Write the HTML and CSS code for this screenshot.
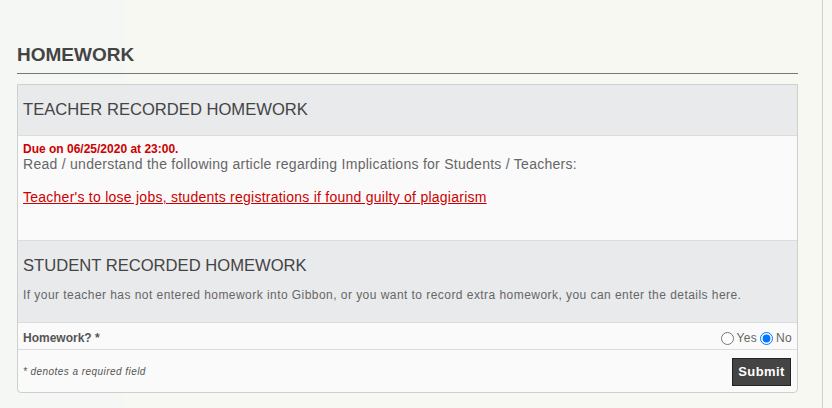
FILE: index.html
```html
<!DOCTYPE html>
<html lang="en">
<head>
  <meta charset="UTF-8" />
  <title>Homework - Gibbon</title>
  <link rel="stylesheet" href="styles.css">
</head>
<body>

  <!-- Page Content -->
  <div class="page">
    <h2 class="page-title">Homework</h2>

    <div class="hw-box">
      <!-- Teacher Section -->
      <div class="hw-head">
        <h3>Teacher Recorded Homework</h3>
      </div>
      <div class="hw-body">
        <div class="due">Due on 06/25/2020 at 23:00.</div>
        <p class="details">Read / understand the following article regarding Implications for Students / Teachers:</p>
        <a class="article-link" href="#">Teacher's to lose jobs, students registrations if found guilty of plagiarism</a>
      </div>

      <!-- Student Section -->
      <div class="hw-head student-head">
        <h3>Student Recorded Homework</h3>
        <p>If your teacher has not entered homework into Gibbon, or you want to record extra homework, you can enter the details here.</p>
      </div>
      <div class="form-row">
        <label class="field-label">Homework? *</label>
        <div class="radios">
          <input type="radio" id="hwYes" name="homework" value="Y"><label for="hwYes">Yes</label>
          <input type="radio" id="hwNo" name="homework" value="N" checked><label for="hwNo">No</label>
        </div>
      </div>
      <div class="form-row form-foot">
        <span class="required-note">* denotes a required field</span>
        <button class="submit-button">Submit</button>
      </div>
    </div>
  </div>

</body>
</html>
```

FILE: styles.css
```css
body {
  margin: 0;
  font-family: "Liberation Sans", Arial, sans-serif;
  background: #f7f8f2;
  height: 408px;
  overflow: hidden;
}

.page {
  width: 823px;
  height: 100%;
  box-sizing: border-box;
  border-right: 1px solid #d0d0cc;
  padding: 44px 0 0 17px;
  background: linear-gradient(to right, #f5f7f4 0, #f5f7f4 125px, #f7f8f2 125px);
}

.page-title {
  width: 781px;
  margin: 0 0 10px;
  padding-bottom: 7px;
  font-size: 19px;
  color: #444;
  text-transform: uppercase;
  border-bottom: 1px solid #777;
}

.hw-box {
  width: 781px;
  box-sizing: border-box;
  border: 1px solid #cfcfcf;
  border-radius: 0 0 4px 4px;
  background: #fafafa;
}

.hw-head {
  background: #e9eaec;
  height: 50px;
  display: flex;
  flex-direction: column;
  justify-content: center;
  padding: 0 5px;
  border-bottom: 1px solid #dcdcdc;
}

.hw-head h3 {
  margin: 0;
  font-size: 16.6px;
  font-weight: normal;
  color: #444;
  text-transform: uppercase;
}

.hw-head p {
  margin: 12px 0 0;
  font-size: 12px;
  letter-spacing: 0.45px;
  color: #666;
}

.student-head {
  height: 82px;
  justify-content: flex-start;
  padding-top: 15px;
  box-sizing: border-box;
}

.hw-body {
  height: 105px;
  padding: 6px 5px 0;
  box-sizing: border-box;
  border-bottom: 1px solid #dcdcdc;
}

.due {
  font-size: 12px;
  font-weight: bold;
  color: #c00;
}

.details {
  margin: 0 0 16px;
  font-size: 14px;
  letter-spacing: 0.27px;
  color: #666;
}

.article-link {
  font-size: 14px;
  letter-spacing: 0.25px;
  color: #c00;
}

.form-row {
  display: flex;
  justify-content: space-between;
  align-items: center;
  height: 26px;
  padding: 0 5px;
  border-bottom: 1px solid #dcdcdc;
}

.field-label {
  font-size: 12px;
  font-weight: bold;
  color: #555;
  padding-top: 4px;
}

.radios {
  display: flex;
  align-items: center;
  font-size: 12px;
  letter-spacing: 0.3px;
  color: #666;
  padding-top: 4px;
}

.radios input {
  margin: 0 3px 0 0;
  width: 13px;
  height: 13px;
}

.radios label {
  margin-right: 3px;
}

.radios label:last-child {
  margin-right: 0;
}

.form-foot {
  height: 42px;
  border-bottom: none;
  padding-right: 6px;
}

.required-note {
  font-size: 10px;
  font-style: italic;
  letter-spacing: 0.45px;
  color: #555;
}

.submit-button {
  height: 28px;
  width: 59px;
  padding: 0;
  margin-top: 1px;
  background: #444;
  color: white;
  border: 1px solid #222;
  font-family: "Liberation Sans", Arial, sans-serif;
  font-size: 13px;
  font-weight: bold;
  letter-spacing: 0.4px;
}
```
